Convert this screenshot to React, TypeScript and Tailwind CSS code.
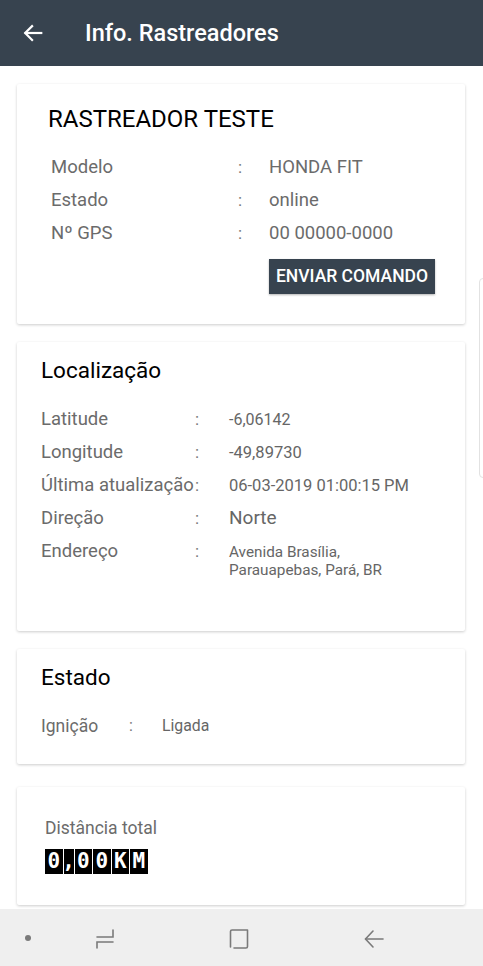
import React from "react";

const font = { fontFamily: "Roboto, 'Noto Sans', sans-serif" };

function Row({ label, value, labelW, valueCls, colonCls }: { label: string; value: React.ReactNode; labelW: string; valueCls: string; colonCls?: string }) {
  return (
    <div className="flex items-start h-[33px]">
      <div className={`${labelW} shrink-0 text-[18.5px] text-[#6b6b6b] leading-[24px]`}>{label}</div>
      <div className={`${colonCls ?? "w-[30px]"} shrink-0 text-[17px] text-[#777] leading-[24px]`}>:</div>
      <div className={valueCls}>{value}</div>
    </div>
  );
}

function Odometer() {
  const chars = ["0", ",", "0", "0", "K", "M"];
  return (
    <div className="flex gap-[1px] h-[25px]">
      {chars.map((c, i) => (
        <div
          key={i}
          className={`bg-black text-white font-bold flex items-center justify-center h-full ${c === "," ? "w-[10px]" : "w-[17.5px]"} text-[21px] leading-none`}
          style={{ fontFamily: "'DejaVu Sans Mono', 'Liberation Mono', monospace" }}
        >
          {c}
        </div>
      ))}
    </div>
  );
}

export default function App() {
  return (
    <div className="relative w-[483px] h-[966px] bg-white flex flex-col overflow-hidden" style={font}>
      {/* Header */}
      <div className="h-[66px] bg-[#37434f] flex items-center shrink-0">
        <svg width="22" height="22" viewBox="0 0 24 24" className="ml-[22px]" fill="none" stroke="white" strokeWidth="2.4" strokeLinecap="square">
          <path d="M21 12H4" />
          <path d="M11 4.5L3.5 12l7.5 7.5" />
        </svg>
        <div className="ml-[41px] mt-[2px] text-white text-[23.5px] font-medium">Info. Rastreadores</div>
      </div>

      <div className="flex-1 flex flex-col px-[17px] pr-[18px] pt-[18px] overflow-hidden">
        {/* Card 1 */}
        <div className="h-[240px] shrink-0 bg-white shadow-[0_1px_3px_rgba(0,0,0,0.2)] rounded-[2px] pt-[21px] pl-[31px] pr-[30px]">
          <div className="text-[24px] text-black leading-[28px]">RASTREADOR TESTE</div>
          <div className="pl-[3px] mt-[22px]">
            <Row label="Modelo" labelW="w-[187px]" colonCls="w-[31px]" valueCls="text-[18.5px] text-[#6b6b6b] leading-[24px]" value="HONDA FIT" />
            <Row label="Estado" labelW="w-[187px]" colonCls="w-[31px]" valueCls="text-[18.5px] text-[#6b6b6b] leading-[24px]" value="online" />
            <Row label="Nº GPS" labelW="w-[187px]" colonCls="w-[31px]" valueCls="text-[18.5px] text-[#6b6b6b] leading-[24px]" value="00 00000-0000" />
          </div>
          <div className="flex justify-end mt-[5px]">
            <div className="h-[35px] w-[166px] bg-[#37434f] text-white text-[17.5px] font-medium flex items-center justify-center shadow-[0_1px_2px_rgba(0,0,0,0.3)]">ENVIAR COMANDO</div>
          </div>
        </div>

        {/* Card 2 */}
        <div className="h-[289px] shrink-0 mt-[18px] bg-white shadow-[0_1px_3px_rgba(0,0,0,0.2)] rounded-[2px] pt-[14px] pl-[24px]">
          <div className="text-[22.5px] text-black leading-[28px]">Localização</div>
          <div className="mt-[23px]">
            <Row label="Latitude" labelW="w-[154px]" colonCls="w-[34px]" valueCls="text-[16px] text-[#666] leading-[24px] pt-[1px]" value="-6,06142" />
            <Row label="Longitude" labelW="w-[154px]" colonCls="w-[34px]" valueCls="text-[16.5px] text-[#666] leading-[24px] pt-[1px]" value="-49,89730" />
            <Row label="Última atualização" labelW="w-[154px]" colonCls="w-[34px]" valueCls="text-[16.5px] text-[#666] leading-[24px] pt-[1px]" value="06-03-2019 01:00:15 PM" />
            <Row label="Direção" labelW="w-[154px]" colonCls="w-[34px]" valueCls="text-[19px] text-[#666] leading-[24px]" value="Norte" />
            <Row
              label="Endereço"
              labelW="w-[154px]"
              colonCls="w-[34px]"
              valueCls="text-[15.3px] text-[#666] leading-[18px] pt-[4px]"
              value={<><div>Avenida Brasília,</div><div>Parauapebas, Pará, BR</div></>}
            />
          </div>
        </div>

        {/* Card 3 */}
        <div className="h-[115px] shrink-0 mt-[18px] bg-white shadow-[0_1px_3px_rgba(0,0,0,0.2)] rounded-[2px] pt-[14px] pl-[24px]">
          <div className="text-[22.5px] text-black leading-[28px]">Estado</div>
          <div className="flex items-center mt-[22px]">
            <div className="w-[88px] text-[17.5px] text-[#6b6b6b] leading-[24px]">Ignição</div>
            <div className="w-[33px] text-[16px] text-[#777] leading-[24px]">:</div>
            <div className="text-[15.8px] text-[#666] leading-[24px] pt-[1px]">Ligada</div>
          </div>
        </div>

        {/* Card 4 */}
        <div className="h-[118px] shrink-0 mt-[23px] bg-white shadow-[0_1px_3px_rgba(0,0,0,0.2)] rounded-[2px] pt-[29px] pl-[28px]">
          <div className="text-[17.5px] text-[#6b6b6b] leading-[24px]">Distância total</div>
          <div className="mt-[9px]">
            <Odometer />
          </div>
        </div>
      </div>

      {/* Bottom nav */}
      <div className="h-[57px] shrink-0 bg-[#efefef] flex items-center relative">
        <div className="absolute left-[25px] top-[26px] w-[6px] h-[6px] rounded-full bg-[#7a7a7a]" />
        <svg className="absolute left-[93px] top-[18px]" width="24" height="24" viewBox="0 0 24 24" fill="none" stroke="#7a7a7a" strokeWidth="1.6" strokeLinecap="round">
          <path d="M4 10H20V3" />
          <path d="M20 15H4V21" />
        </svg>
        <svg className="absolute left-[227px] top-[18px]" width="24" height="24" viewBox="0 0 24 24" fill="none" stroke="#7a7a7a" strokeWidth="1.6" strokeLinecap="round" strokeLinejoin="round">
          <path d="M3.5 20V4.5Q3.5 3 5 3H20.5V19.5Q20.5 21 19 21H7" />
        </svg>
        <svg className="absolute left-[362px] top-[18px]" width="24" height="24" viewBox="0 0 24 24" fill="none" stroke="#7a7a7a" strokeWidth="1.6" strokeLinecap="round">
          <path d="M21 12H4" />
          <path d="M11 4L3.5 12L11 20" />
        </svg>
      </div>

      {/* scroll indicator at right edge */}
      <div className="absolute right-[-6px] top-[278px] w-[10px] h-[200px] rounded-[4px] border border-[#e2e2e2] bg-white" />
    </div>
  );
}
